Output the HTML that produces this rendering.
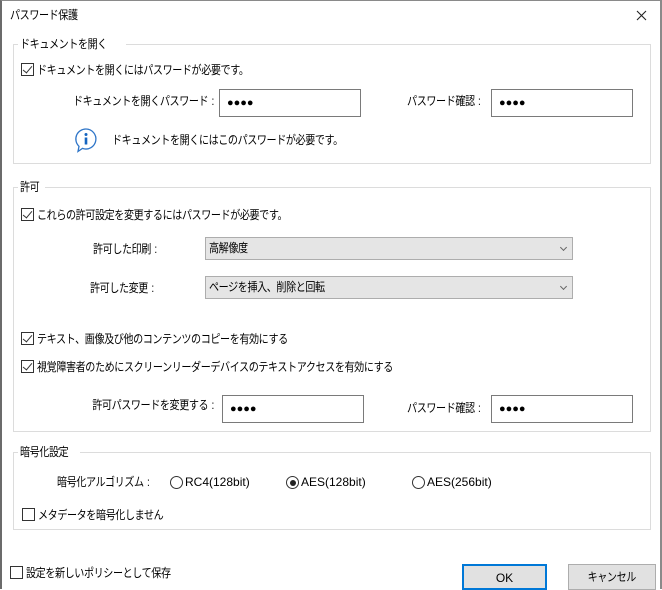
<!DOCTYPE html>
<html><head><meta charset="utf-8"><style>
*{box-sizing:border-box;margin:0;padding:0}
body{width:662px;height:589px;background:#fff;font-family:"Liberation Sans","Noto Sans CJK JP",sans-serif;font-size:12px;color:#000;position:relative;overflow:hidden;letter-spacing:-0.5px}
.a{position:absolute;white-space:nowrap;line-height:14px;transform:scaleX(0.84);transform-origin:left center}
.r{position:absolute;white-space:nowrap;line-height:14px;text-align:right;transform:scaleX(0.84);transform-origin:right center}
.win{position:absolute;left:0;top:0;width:662px;height:589px;border-left:2px solid #6b6b6b;border-right:2px solid #8a8a8a;border-top:1px solid #8a8a8a}
.grp{position:absolute;border:1px solid #dcdcdc}
.leg{position:absolute;background:#fff;padding:0 2px;line-height:14px;white-space:nowrap}
.leg span{display:inline-block;transform:scaleX(0.84);transform-origin:left center}
.cb{position:absolute;width:13px;height:13px;border:1px solid #333;background:#fff}
.cb.on::after{content:"";position:absolute;left:3px;top:0px;width:4px;height:8px;border-right:1.5px solid #333;border-bottom:1.5px solid #333;transform:rotate(40deg)}
.inp{position:absolute;border:1px solid #7a7a7a;background:#fff;height:28px;width:142px;font-size:11px;letter-spacing:0;line-height:26px;padding-left:7px}
.sel{position:absolute;left:205px;width:368px;height:23px;background:#e5e5e5;border:1px solid #adadad;line-height:21px;padding-left:3px}
.sel span{display:inline-block;transform:scaleX(0.84);transform-origin:left center}
.sel::after{content:"";position:absolute;right:6px;top:7px;width:4px;height:4px;border-right:1px solid #666;border-bottom:1px solid #666;transform:rotate(45deg)}
.rd{position:absolute;width:13px;height:13px;border:1px solid #333;border-radius:50%;background:#fff}
.rd.on::after{content:"";position:absolute;left:2.5px;top:2.5px;width:6px;height:6px;border-radius:50%;background:#222}
.lat{letter-spacing:0;transform:none}
.c{letter-spacing:0;margin-left:4px}
.btn{position:absolute;height:26px;background:#e1e1e1;border:1px solid #adadad;text-align:center;line-height:24px}
</style></head><body>
<div class="win"></div>
<div class="a" style="left:10px;top:8px">パスワード保護</div>
<svg style="position:absolute;left:636px;top:10px" width="11" height="11"><path d="M1 1L10 10M10 1L1 10" stroke="#222" stroke-width="1.1"/></svg>

<div class="grp" style="left:13px;top:44px;width:638px;height:120px"></div>
<div class="leg" style="left:18px;top:37px"><span>ドキュメントを開く</span></div>
<div class="cb on" style="left:21px;top:63px"></div>
<div class="a" style="left:37px;top:63px">ドキュメントを開くにはパスワードが必要です。</div>
<div class="r" style="right:448px;top:94px">ドキュメントを開くパスワード<span class="c">:</span></div>
<div class="inp" style="left:219px;top:89px">●●●●</div>
<div class="r" style="right:181px;top:94px">パスワード確認<span class="c">:</span></div>
<div class="inp" style="left:491px;top:89px">●●●●</div>
<svg style="position:absolute;left:74px;top:127px" width="26" height="28"><path d="M12 2a10 10 0 1 1-3.5 19.4L4 24.5l1-5.2A10 10 0 0 1 12 2z" fill="#fff" stroke="#2e75c8" stroke-width="1.3"/><circle cx="12" cy="7.5" r="1.5" fill="#1565c0"/><rect x="10.7" y="10.5" width="2.6" height="7" fill="#1565c0"/></svg>
<div class="a" style="left:112px;top:133px">ドキュメントを開くにはこのパスワードが必要です。</div>

<div class="grp" style="left:13px;top:187px;width:638px;height:245px"></div>
<div class="leg" style="left:18px;top:180px"><span>許可</span></div>
<div class="cb on" style="left:21px;top:208px"></div>
<div class="a" style="left:37px;top:208px">これらの許可設定を変更するにはパスワードが必要です。</div>
<div class="a" style="left:93px;top:242px">許可した印刷<span class="c">:</span></div>
<div class="sel" style="top:237px"><span>高解像度</span></div>
<div class="a" style="left:90px;top:281px">許可した変更<span class="c">:</span></div>
<div class="sel" style="top:276px"><span>ページを挿入、削除と回転</span></div>
<div class="cb on" style="left:21px;top:332px"></div>
<div class="a" style="left:37px;top:332px">テキスト、画像及び他のコンテンツのコピーを有効にする</div>
<div class="cb on" style="left:21px;top:360px"></div>
<div class="a" style="left:37px;top:360px">視覚障害者のためにスクリーンリーダーデバイスのテキストアクセスを有効にする</div>
<div class="r" style="right:448px;top:398px">許可パスワードを変更する<span class="c">:</span></div>
<div class="inp" style="left:222px;top:395px">●●●●</div>
<div class="r" style="right:181px;top:401px">パスワード確認<span class="c">:</span></div>
<div class="inp" style="left:491px;top:395px">●●●●</div>

<div class="grp" style="left:13px;top:452px;width:638px;height:78px"></div>
<div class="leg" style="left:18px;top:445px"><span>暗号化設定</span></div>
<div class="a" style="left:57px;top:475px">暗号化アルゴリズム<span class="c">:</span></div>
<div class="rd" style="left:170px;top:476px"></div>
<div class="a lat" style="left:185px;top:475px">RC4(128bit)</div>
<div class="rd on" style="left:286px;top:476px"></div>
<div class="a lat" style="left:301px;top:475px">AES(128bit)</div>
<div class="rd" style="left:412px;top:476px"></div>
<div class="a lat" style="left:427px;top:475px">AES(256bit)</div>
<div class="cb" style="left:22px;top:508px"></div>
<div class="a" style="left:38px;top:508px">メタデータを暗号化しません</div>

<div class="cb" style="left:10px;top:566px"></div>
<div class="a" style="left:26px;top:566px">設定を新しいポリシーとして保存</div>
<div class="btn lat" style="left:462px;top:564px;width:85px;border:2px solid #0078d7">OK</div>
<div class="btn" style="left:568px;top:564px;width:88px"><span style="display:inline-block;transform:scaleX(0.84)">キャンセル</span></div>
</body></html>
